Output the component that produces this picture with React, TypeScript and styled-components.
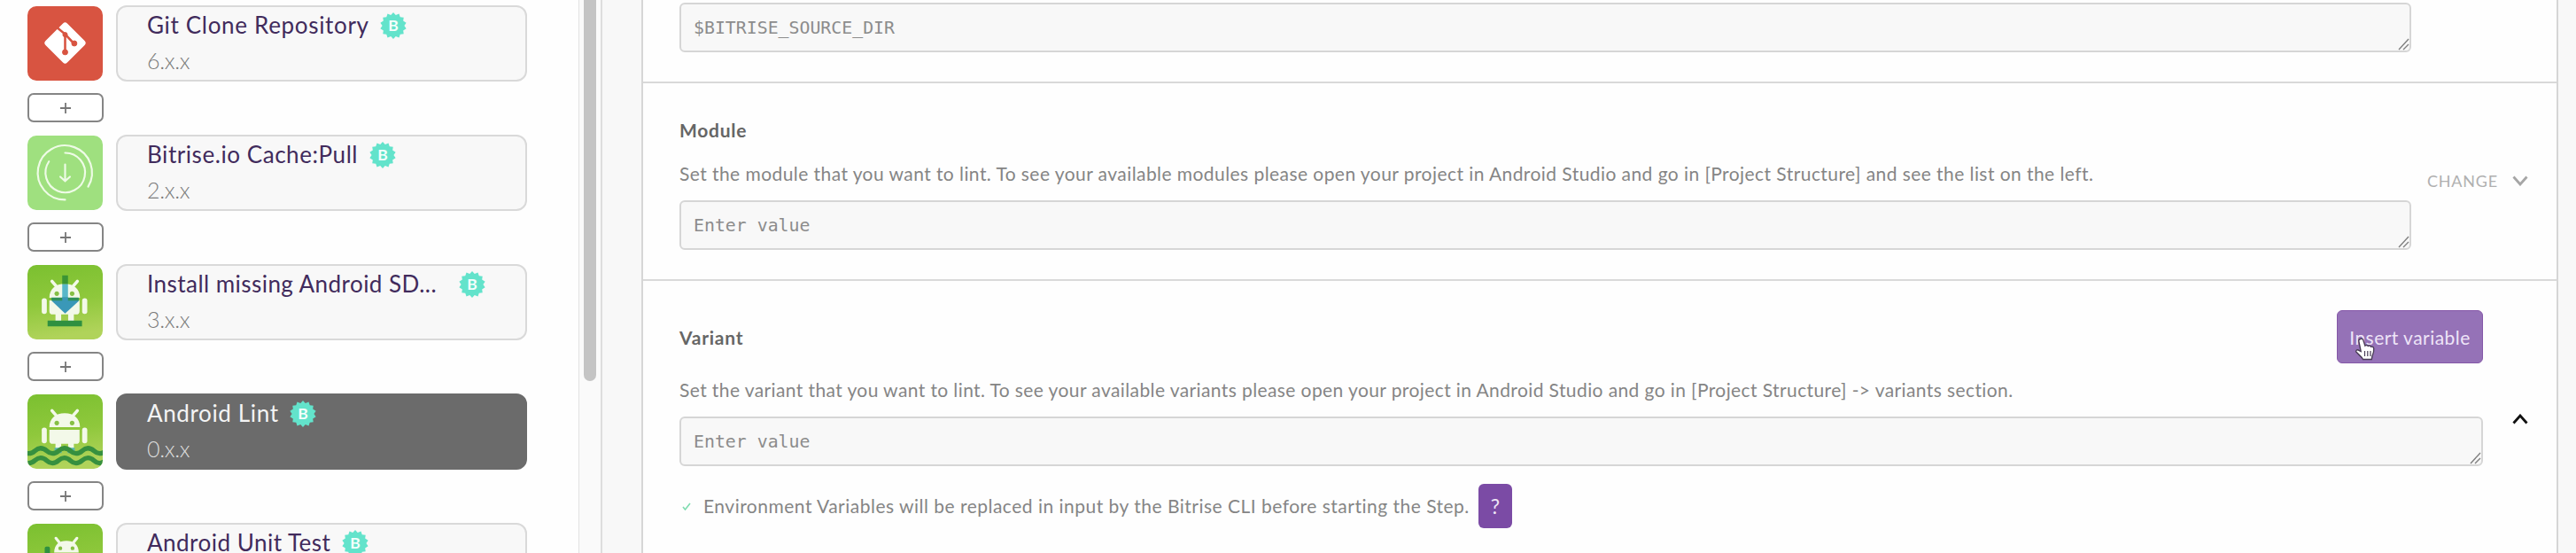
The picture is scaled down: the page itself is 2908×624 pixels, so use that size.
import React from "react";
import styled, { createGlobalStyle } from "styled-components";

const sans = `Lato, "Open Sans", "Liberation Sans", sans-serif`;
const mono = `"DejaVu Sans Mono", "Liberation Mono", monospace`;

const GlobalStyle = createGlobalStyle`
  * { box-sizing: border-box; }
  body { margin: 0; background: #f8f8f8; font-family: ${sans}; }
`;

const Page = styled.div`
  display: flex;
  width: 2908px;
  height: 624px;
  overflow: hidden;
`;

/* Workflow step list */

const Sidebar = styled.aside`
  display: flex;
  flex-direction: column;
  gap: 14px;
  width: 653px;
  padding: 6px 0 0 31px;
  background: #fefefe;
`;

const StepRow = styled.div`
  display: flex;
  flex: none;
  align-items: center;
  gap: 14px;
  height: 85px;
`;

const StepIcon = styled.svg`
  flex: none;
  display: block;
  width: 85px;
  height: 84px;
  margin-right: 1px;
  border-radius: 10px;
`;

const StepCard = styled.div<{ $active?: boolean }>`
  width: 464px;
  height: 86px;
  padding: 4px 33px;
  border: 2px solid ${(p) => (p.$active ? "#6b6b6b" : "#d9d9d9")};
  border-radius: 12px;
  background: ${(p) => (p.$active ? "#6b6b6b" : "#f8f8f8")};
`;

const StepHeading = styled.div`
  display: flex;
  align-items: center;
  height: 32px;
`;

const StepTitle = styled.div<{ $active?: boolean; $tracking: number }>`
  white-space: pre;
  font-size: 26px;
  line-height: 32px;
  letter-spacing: ${(p) => p.$tracking}px;
  color: ${(p) => (p.$active ? "#f4f4f4" : "#412b5c")};
`;

const BadgeIcon = styled.svg<{ $gap: number }>`
  flex: none;
  display: block;
  width: 30px;
  height: 30px;
  margin: 2px 0 0 ${(p) => p.$gap}px;
`;

const StepVersion = styled.div<{ $active?: boolean }>`
  margin-top: 8px;
  font-size: 25px;
  font-weight: 300;
  line-height: 32px;
  letter-spacing: -0.3px;
  color: ${(p) => (p.$active ? "#dcdcdc" : "#7c7c7c")};
`;

const AddButton = styled.button`
  display: flex;
  flex: none;
  align-items: center;
  justify-content: center;
  width: 86px;
  height: 33px;
  padding: 0;
  border: 2px solid #858585;
  border-radius: 7px;
  background: #fff;
`;

const ScrollTrack = styled.div`
  flex: none;
  width: 27px;
  padding-left: 5px;
  border-left: 1px solid #e3e3e3;
  border-right: 2px solid #dedede;
  background: #fafafa;
`;

const ScrollThumb = styled.div`
  width: 14px;
  height: 430px;
  border-radius: 0 0 7px 7px;
  background: #c4c4c4;
`;

/* Step inputs */

const InputsPanel = styled.main`
  flex: none;
  width: 2164px;
  margin-left: 44px;
  border: 0 solid #d6d6d6;
  border-width: 0 2px;
  background: #fefefe;
`;

const Section = styled.section<{ $top: number; $bottom: number }>`
  display: flex;
  padding: ${(p) => p.$top}px 32px ${(p) => p.$bottom}px 41px;
  border-bottom: 2px solid #d9d9d9;
`;

const Fields = styled.div<{ $width: number }>`
  flex: none;
  width: ${(p) => p.$width}px;
`;

const FieldHeader = styled.div<{ $height: number; $gap: number }>`
  display: flex;
  align-items: center;
  justify-content: space-between;
  height: ${(p) => p.$height}px;
  margin-bottom: ${(p) => p.$gap}px;
`;

const FieldTitle = styled.h3`
  margin: 0;
  padding-top: 1px;
  font-size: 21px;
  font-weight: 700;
  line-height: 26px;
  letter-spacing: 0.75px;
  color: #666;
`;

const Description = styled.p<{ $tracking: number }>`
  margin: 0 0 17px;
  white-space: nowrap;
  font-size: 21px;
  line-height: 26px;
  letter-spacing: ${(p) => p.$tracking}px;
  color: #858585;
`;

const ValueBox = styled.div`
  position: relative;
  display: flex;
  align-items: center;
  height: 56px;
  padding: 1px 14px 0;
  border: 2px solid #d6d6d6;
  border-radius: 6px;
  background: #f8f8f8;
  font-family: ${mono};
  font-size: 19.85px;
  line-height: 26px;
  color: #8c8c8c;
`;

const ResizeGrip = styled.svg`
  position: absolute;
  right: 0;
  bottom: 0;
  width: 13px;
  height: 14px;
`;

const InsertButton = styled.button`
  position: relative;
  width: 165px;
  height: 60px;
  padding: 0;
  border: 1px solid #8558a8;
  border-radius: 6px;
  background: #9572b7;
  font-family: ${sans};
  font-size: 21px;
  letter-spacing: 0.46px;
  color: #eee4f7;
`;

const PointerIcon = styled.svg`
  position: absolute;
  left: 18px;
  top: 28px;
  width: 26px;
  height: 30px;
`;

const Note = styled.div`
  display: flex;
  align-items: center;
  height: 50px;
  margin-top: 20px;
  font-size: 21px;
  line-height: 26px;
  letter-spacing: 0.49px;
  color: #858585;
`;

const NoteCheck = styled.svg`
  width: 10px;
  height: 9px;
  margin: 0 14px 0 3px;
`;

const HelpButton = styled.button`
  width: 38px;
  height: 50px;
  margin-left: 10px;
  padding: 0 0 1px;
  border: 0;
  border-radius: 6px;
  background: #7b4ba5;
  font-family: ${sans};
  font-size: 23px;
  color: #efe6f6;
`;

const Toggle = styled.div<{ $raise?: number }>`
  display: flex;
  flex: 1;
  align-items: center;
  justify-content: flex-end;
  gap: 16px;
  padding-bottom: ${(p) => p.$raise ?? 0}px;
  font-size: 18px;
  line-height: 22px;
  letter-spacing: 0.8px;
  color: #b0b0b0;
`;

const Chevron = styled.svg<{ $up?: boolean }>`
  width: 18px;
  height: 12px;
  fill: none;
  stroke: ${(p) => (p.$up ? "#111" : "#a6a6a6")};
  stroke-width: 2.8;
  transform: ${(p) => (p.$up ? "rotate(180deg)" : "none")};
`;

/* Drawings */

const VerifiedBadge = ({ gap }: { gap: number }) => {
  const points = Array.from({ length: 28 }, (_, i) => {
    const r = i % 2 ? 12.4 : 15;
    const a = (i * Math.PI) / 14;
    return `${(15 + r * Math.sin(a)).toFixed(2)},${(15 - r * Math.cos(a)).toFixed(2)}`;
  }).join(" ");
  return (
    <BadgeIcon $gap={gap} viewBox="0 0 30 30">
      <polygon points={points} fill="#63e3cb" />
      <text x="15" y="21" textAnchor="middle" fontFamily="Lato" fontWeight="700" fontSize="17.5" fill="#f4fffc">
        B
      </text>
    </BadgeIcon>
  );
};

const Plus = () => (
  <svg width="14" height="14" viewBox="0 0 14 14">
    <path d="M7 1v12M1 7h12" stroke="#777" strokeWidth="1.8" />
  </svg>
);

const GreenTile = ({ id }: { id: string }) => (
  <>
    <defs>
      <linearGradient id={id} x1="0" y1="0" x2="0.15" y2="1">
        <stop offset="0" stopColor="#7bc030" />
        <stop offset="0.55" stopColor="#8fc83c" />
        <stop offset="1" stopColor="#b0d35a" />
      </linearGradient>
    </defs>
    <rect width="86" height="85" fill={`url(#${id})`} />
  </>
);

const Robot = () => (
  <g fill="#f3f9e9">
    <path d="M28 18.5l5 6M57 18.5l-5 6" stroke="#f3f9e9" strokeWidth="3.6" strokeLinecap="round" />
    <path d="M25 37.5c0-10 7-16 17.500-16s17.500 6 17.500 16z" />
    <path d="M25 40.5h34.500v12a4 4 0 0 1-4 4h-2.500v10h-6.500v-10h-8v10h-6.500v-10h-3a4 4 0 0 1-4-4z" />
    <rect x="16.3" y="38" width="5.8" height="18" rx="2.8" />
    <rect x="62.5" y="38" width="5.8" height="18" rx="2.8" />
    <circle cx="33.5" cy="32.7" r="2.6" fill="#86bf45" />
    <circle cx="51" cy="32.7" r="2.6" fill="#86bf45" />
  </g>
);

const GitIcon = () => (
  <StepIcon viewBox="0 0 86 85">
    <rect width="86" height="85" fill="#d85441" />
    <rect x="25.5" y="24.5" width="35" height="35" rx="3.5" fill="#fff" transform="rotate(45 43 42)" />
    <g fill="#d85441" stroke="#d85441">
      <path d="M34 24.5L43 32L53 42.5M43 32v20" fill="none" strokeWidth="2.6" />
      <circle cx="43" cy="32.5" r="2.6" />
      <circle cx="53.5" cy="42.5" r="3" />
      <circle cx="43" cy="52.5" r="3" />
    </g>
  </StepIcon>
);

const CacheIcon = () => (
  <StepIcon viewBox="0 0 86 85">
    <rect width="86" height="85" fill="#9fe07f" />
    <g fill="none" stroke="#eefbe6" strokeWidth="2.2" strokeLinecap="round">
      <path d="M43 73.3A31 31 0 1 1 69.3 58.3" />
      <path d="M43 19.7A22.6 22.6 0 1 1 24.5 29.6" />
      <path d="M43 33v18.5M37.5 47l5.5 5 5.5-5" />
    </g>
  </StepIcon>
);

const InstallIcon = () => (
  <StepIcon viewBox="0 0 86 85">
    <GreenTile id="install" />
    <Robot />
    <path d="M39.7 12h6.6v10h-6.6z" fill="#3b9434" />
    <path d="M39.7 22h6.6v16h-6.6z" fill="#58b7c9" />
    <path d="M28 37.5h30.500v3.800L43 55.500 28 41.300z" fill="#3a98b8" />
    <path d="M27.5 37.3h31v3.400h-31z" fill="#2f8f5b" />
    <path d="M39.7 37h6.600v8h-6.600z" fill="#3a98b8" />
    <path d="M23 63.5h39.300v6.600H23z" fill="#2f9040" />
  </StepIcon>
);

const wave = (y: number) =>
  `M-12 ${y - 3}` +
  [1.5, 15, 28.5, 42, 55.5, 69, 82.5, 96]
    .map((x, i) => {
      const end = i % 2 ? y - 3 : y + 3;
      const start = i % 2 ? y + 3 : y - 3;
      return `C${x - 6.5} ${start} ${x - 6.5} ${end} ${x} ${end}`;
    })
    .join("");

const LintIcon = () => (
  <StepIcon viewBox="0 0 86 85">
    <GreenTile id="lint" />
    <Robot />
    <path d="M31 61h8v6h-8zM46 61h8v6h-8z" fill="#55b3b0" />
    <g fill="none" stroke="#36903f" strokeWidth="5.4">
      <path d={wave(64.5)} />
      <path d={wave(75.5)} />
    </g>
  </StepIcon>
);

const UnitTestIcon = () => (
  <StepIcon viewBox="0 0 86 85">
    <GreenTile id="unit" />
    <g fill="#f3f9e9">
      <path d="M32.5 16.5l4 5M56.5 16.500l-4 5" stroke="#f3f9e9" strokeWidth="3.2" strokeLinecap="round" />
      <path d="M30.5 33c0-9 5.500-13.500 14-13.500s14 4.500 14 13.500z" />
      <circle cx="37.5" cy="28" r="2.2" fill="#86bf45" />
      <circle cx="51.5" cy="28" r="2.2" fill="#86bf45" />
    </g>
    <rect x="19.7" y="26" width="6" height="40" rx="2" fill="#2f9040" />
  </StepIcon>
);

const Grip = () => (
  <ResizeGrip viewBox="0 0 13 14">
    <path d="M1 13L12 1M6 13L12 7" stroke="#808080" strokeWidth="1.4" fill="none" />
  </ResizeGrip>
);

const ChevronIcon = ({ up }: { up?: boolean }) => (
  <Chevron $up={up} viewBox="0 0 18 12">
    <path d="M1.5 1.5L9 10L16.5 1.5" />
  </Chevron>
);

const Pointer = () => (
  <PointerIcon viewBox="0 0 26 30">
    <path
      d="M7.5 3.5c1.800-.8 3 .2 3.400 1.600l2 6c1-1 2.800-.8 3.400.4 1-.8 2.700-.5 3.200.8 1.400-.6 3 .2 3.200 2 .4 4-.4 5.500-1.800 8.700l-.6 3.500H10.500C9 23.500 5.500 21 3 18.300c-1-1.300.4-3 2.200-2.300l3 1.500L5.800 6c-.3-1.200.4-2.100 1.700-2.500z"
      fill="#fff"
      stroke="#4a3d57"
      strokeWidth="1.4"
    />
    <path d="M12.5 17v6M15.8 17v6M19 17v6" stroke="#4a3d57" strokeWidth="1.2" />
  </PointerIcon>
);

type Step = {
  title: string;
  version?: string;
  tracking: number;
  badgeGap: number;
  icon: React.ReactNode;
  active?: boolean;
};

const steps: Step[] = [
  { title: "Git Clone Repository", version: "6.x.x", tracking: 0.68, badgeGap: 12, icon: <GitIcon /> },
  { title: "Bitrise.io Cache:Pull", version: "2.x.x", tracking: 0.56, badgeGap: 13, icon: <CacheIcon /> },
  { title: "Install missing Android SD...", version: "3.x.x", tracking: 0.46, badgeGap: 25, icon: <InstallIcon /> },
  { title: "Android Lint", version: "0.x.x", tracking: 0.64, badgeGap: 12, icon: <LintIcon />, active: true },
  { title: "Android Unit Test", tracking: 0.5, badgeGap: 13, icon: <UnitTestIcon /> },
];

export default function App() {
  return (
    <Page>
      <GlobalStyle />
      <Sidebar>
        {steps.map((s, i) => (
          <React.Fragment key={s.title}>
            <StepRow>
              {s.icon}
              <StepCard $active={s.active}>
                <StepHeading>
                  <StepTitle $active={s.active} $tracking={s.tracking}>
                    {s.title}
                  </StepTitle>
                  <VerifiedBadge gap={s.badgeGap} />
                </StepHeading>
                {s.version && <StepVersion $active={s.active}>{s.version}</StepVersion>}
              </StepCard>
            </StepRow>
            {i < steps.length - 1 && (
              <AddButton aria-label="Add step">
                <Plus />
              </AddButton>
            )}
          </React.Fragment>
        ))}
      </Sidebar>
      <ScrollTrack>
        <ScrollThumb />
      </ScrollTrack>
      <InputsPanel>
        <Section $top={3} $bottom={33}>
          <Fields $width={1955}>
            <ValueBox>
              $BITRISE_SOURCE_DIR
              <Grip />
            </ValueBox>
          </Fields>
        </Section>
        <Section $top={39} $bottom={33}>
          <Fields $width={1955}>
            <FieldHeader $height={26} $gap={24}>
              <FieldTitle>Module</FieldTitle>
            </FieldHeader>
            <Description $tracking={0.435}>
              Set the module that you want to lint. To see your available modules please open your project in Android
              Studio and go in [Project Structure] and see the list on the left.
            </Description>
            <ValueBox>
              Enter value
              <Grip />
            </ValueBox>
          </Fields>
          <Toggle $raise={7}>
            CHANGE
            <ChevronIcon />
          </Toggle>
        </Section>
        <Section $top={33} $bottom={35}>
          <Fields $width={2036}>
            <FieldHeader $height={60} $gap={17}>
              <FieldTitle>Variant</FieldTitle>
              <InsertButton>
                Insert variable
                <Pointer />
              </InsertButton>
            </FieldHeader>
            <Description $tracking={0.4}>
              Set the variant that you want to lint. To see your available variants please open your project in Android
              Studio and go in [Project Structure] -&gt; variants section.
            </Description>
            <ValueBox>
              Enter value
              <Grip />
            </ValueBox>
            <Note>
              <NoteCheck viewBox="0 0 10 9">
                <path d="M1 5l2.500 3L9 1" fill="none" stroke="#7fdcb0" strokeWidth="1.6" />
              </NoteCheck>
              Environment Variables will be replaced in input by the Bitrise CLI before starting the Step.
              <HelpButton>?</HelpButton>
            </Note>
          </Fields>
          <Toggle>
            <ChevronIcon up />
          </Toggle>
        </Section>
      </InputsPanel>
    </Page>
  );
}
